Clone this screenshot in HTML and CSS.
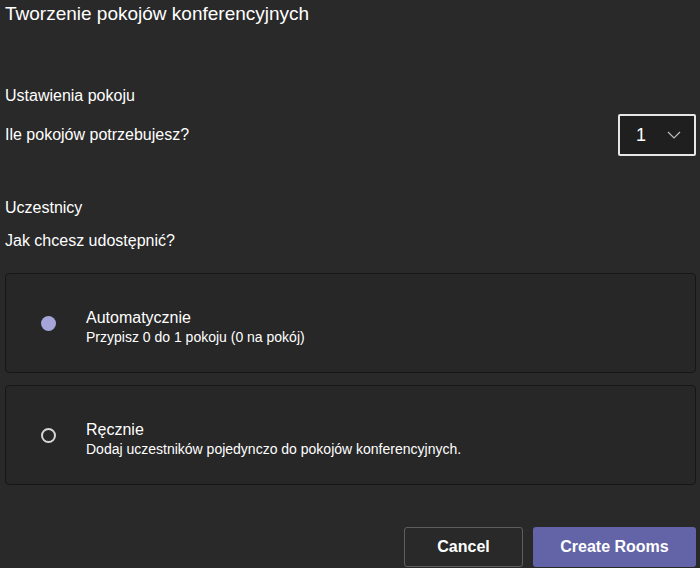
FILE: index.html
```html
<!DOCTYPE html>
<html lang="pl">
<head>
  <meta charset="UTF-8">
  <title>Tworzenie pokojów konferencyjnych</title>
  <link rel="stylesheet" href="styles.css">
</head>
<body>
  <div class="dialog">
    <h1>Tworzenie pokojów konferencyjnych</h1>

    <!-- Room settings -->
    <div class="section-title first">Ustawienia pokoju</div>
    <div class="row">
      <span class="label">Ile pokojów potrzebujesz?</span>
      <div class="dropdown">
        <span>1</span>
        <svg width="14" height="8" viewBox="0 0 14 8"><path d="M1 1l6 6 6-6" fill="none" stroke="#bdbdbd" stroke-width="1.2"/></svg>
      </div>
    </div>

    <!-- Participants -->
    <div class="section-title second">Uczestnicy</div>
    <div class="label question">Jak chcesz udostępnić?</div>

    <div class="option">
      <span class="radio checked"></span>
      <div class="option-text">
        <div class="option-title">Automatycznie</div>
        <div class="option-sub">Przypisz 0 do 1 pokoju (0 na pokój)</div>
      </div>
    </div>

    <div class="option">
      <span class="radio"></span>
      <div class="option-text">
        <div class="option-title">Ręcznie</div>
        <div class="option-sub">Dodaj uczestników pojedynczo do pokojów konferencyjnych.</div>
      </div>
    </div>

    <div class="actions">
      <button class="btn secondary">Cancel</button>
      <button class="btn primary">Create Rooms</button>
    </div>
  </div>
</body>
</html>
```

FILE: styles.css
```css
body {
  margin: 0;
  background-color: #292929;
  color: #fff;
  font-family: "Liberation Sans", Arial, sans-serif;
}
.dialog {
  padding: 0 4px 0 5px;
}
h1 {
  margin: 0;
  font-size: 19px;
  font-weight: normal;
  line-height: 28px;
}
.section-title,
.label {
  font-size: 16px;
  line-height: 20px;
}
.section-title.first {
  margin-top: 58px;
}
.section-title.second {
  margin-top: 42px;
}
.question {
  margin-top: 13px;
}
.row {
  margin-top: 8px;
  display: flex;
  align-items: center;
  justify-content: space-between;
}
.dropdown {
  width: 78px;
  height: 42px;
  box-sizing: border-box;
  border: 2px solid #e6e6e6;
  border-radius: 2px;
  background-color: #1f1f1f;
  display: flex;
  align-items: center;
  justify-content: space-between;
  padding: 0 13px 0 16px;
  font-size: 18px;
}
.option {
  height: 100px;
  box-sizing: border-box;
  margin-top: 12px;
  border: 1px solid #161616;
  border-radius: 4px;
  background-color: #272727;
  display: flex;
  align-items: flex-start;
  padding: 34px 0 0 35px;
}
.question + .option {
  margin-top: 22px;
}
.radio {
  width: 15px;
  height: 15px;
  box-sizing: border-box;
  margin-top: 8px;
  border: 2px solid #d6d6d6;
  border-radius: 50%;
  flex-shrink: 0;
}
.radio.checked {
  border: none;
  background-color: #a6a5d9;
}
.option-text {
  margin-left: 30px;
}
.option-title {
  font-size: 16px;
  line-height: 20px;
}
.option-sub {
  font-size: 14px;
  line-height: 19px;
}
.actions {
  margin-top: 42px;
  display: flex;
  justify-content: flex-end;
  gap: 10px;
}
.btn {
  height: 40px;
  box-sizing: border-box;
  font-family: "Liberation Sans", Arial, sans-serif;
  font-size: 16px;
  font-weight: bold;
  color: #fff;
  border-radius: 3px;
  cursor: pointer;
}
.btn.secondary {
  width: 119px;
  background-color: transparent;
  border: 1px solid #5e5e5e;
}
.btn.primary {
  width: 163px;
  background-color: #6264a7;
  border: none;
}
```
